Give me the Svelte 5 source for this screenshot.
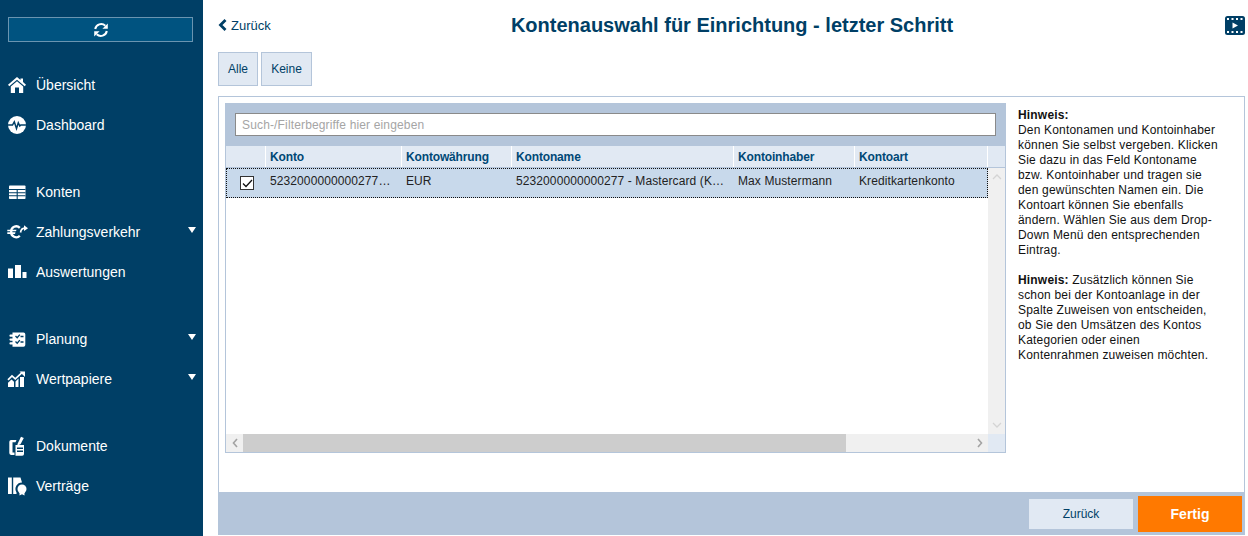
<script>
  const cols = [
    { label: 'Konto', cell: '5232000000000277…', w: 136 },
    { label: 'Kontowährung', cell: 'EUR', w: 110 },
    { label: 'Kontoname', cell: '5232000000000277 - Mastercard (K…', w: 222 },
    { label: 'Kontoinhaber', cell: 'Max Mustermann', w: 121 },
    { label: 'Kontoart', cell: 'Kreditkartenkonto', w: 133 }
  ];
  const groups = [
    [{ t: 'Übersicht', i: 'home' }, { t: 'Dashboard', i: 'dash' }],
    [{ t: 'Konten', i: 'konten' }, { t: 'Zahlungsverkehr', i: 'euro', c: true }, { t: 'Auswertungen', i: 'bars' }],
    [{ t: 'Planung', i: 'plan', c: true }, { t: 'Wertpapiere', i: 'chart', c: true }],
    [{ t: 'Dokumente', i: 'doc' }, { t: 'Verträge', i: 'contract' }]
  ];
</script>

<div class="page">
  <aside class="side">
    <button class="sync" aria-label="Aktualisieren">
      <svg width="16" height="16" viewBox="0 0 16 16"><path d="M2.200 7A6 6 0 0 1 12.300 3.800M13.800 9A6 6 0 0 1 3.700 12.200" fill="none" stroke="#fff" stroke-width="2"/><path d="M14.800 1.400V6.800H9.400ZM1.200 14.600V9.200H6.600Z" fill="#fff"/></svg>
    </button>
    {#each groups as g}
      <ul class="group">
        {#each g as it}
          <li class="item">
            <span class="ico">
              <svg width="22" height="20" viewBox="0 0 22 20" fill="#fff">
                {#if it.i === 'home'}
                  <path d="M10 2L1 9.700l1.300 1.500L10 4.700l7.700 6.500L19 9.700l-3-2.600V3.500h-2.500v1.500Z"/><path fill-rule="evenodd" d="M10 6.300l6.200 5.200V18H3.800V11.500ZM8 12.500V18h4v-5.500Z"/>
                {:else if it.i === 'dash'}
                  <circle cx="10" cy="10" r="9"/><path d="M0.500 10H5.500L7.300 6.800L9.500 13.500L11.300 7.800L12.800 11L13.800 10H19.500" fill="none" stroke="#003f66" stroke-width="1.500"/>
                {:else if it.i === 'konten'}
                  <rect x="2" y="3.500" width="16.500" height="13.500" rx="0.800"/><path d="M2 7.500H18.500M2 10.800H18.500M2 13.800H18.500M10.200 7.500V17" fill="none" stroke="#003f66" stroke-width="1.100"/>
                {:else if it.i === 'euro'}
                  <path d="M12.800 5.600A5 5 0 0 0 4.200 9.500A5 5 0 0 0 12.800 13.400" fill="none" stroke="#fff" stroke-width="2.300" transform="translate(0 .300)"/><path d="M0.300 7.700H9.500L9 9.300H0.300ZM0.300 10.300H8.500L8 11.900H0.300Z"/><path d="M13.500 10.500C14 7.500 15.500 6.300 17.500 6.200" fill="none" stroke="#fff" stroke-width="1.700"/><path d="M17 3.300L21 6.200L17 9Z"/>
                {:else if it.i === 'bars'}
                  <path d="M1 6.500h5V16H1ZM8 3h6v13H8ZM15.500 10H19.500V16H15.500Z"/>
                {:else if it.i === 'plan'}
                  <path d="M5.500 3.500H16.500A1.800 1.800 0 0 1 18.300 5.300V16A1.800 1.800 0 0 1 16.500 17.800H5.500V15.500H3.500A1.100 1.100 0 0 1 3.500 13.300H5.500V11.700H3.500A1.100 1.100 0 0 1 3.500 9.500H5.500V7.800H3.500A1.100 1.100 0 0 1 3.500 5.600H5.500Z"/><path d="M8.500 7L10.200 8.700L12.800 5.600M13.500 7.500H16.500M8.500 12.500L10.200 14.200L12.800 11.100M13.500 13H16.500" fill="none" stroke="#003f66" stroke-width="1.300"/>
                {:else if it.i === 'chart'}
                  <path d="M1 18V13.800L4.500 10.500L7 12.800V18ZM8.500 18V12.500L11.500 9.500V18ZM13 18V8H17V18Z"/><path d="M1 10.800L5 6.800L8.300 9.800L15.500 3.200" fill="none" stroke="#fff" stroke-width="1.700"/><path d="M12.500 2.500H18V8Z"/>
                {:else if it.i === 'doc'}
                  <path fill-rule="evenodd" d="M4 4H9.500L8.500 6.200H5.500V16.500H7.500V19H4A2 2 0 0 1 2.300 17V5.700A2 2 0 0 1 4 4ZM8.500 9H17V18A1.800 1.800 0 0 1 15.200 19.800H8.500ZM10 11.500V13H16V11.500ZM10 14.500V16H16V14.500Z"/><path d="M10.500 8L14 0.800L16.800 2L13.500 8.200L10.500 9.500Z"/>
                {:else if it.i === 'contract'}
                  <path d="M1 1.500H4.800V18H1ZM6.200 1.500H13.500L15 6.500A6.500 6.500 0 0 0 9.500 16.500L9.500 18H6.200Z"/><circle cx="15" cy="13" r="4.500"/><path d="M12.500 16H17.500V19.500L15 18.300L12.500 19.500Z"/>
                {/if}
              </svg>
            </span>
            <span class="label">{it.t}</span>
            {#if it.c}<span class="caret"></span>{/if}
          </li>
        {/each}
      </ul>
    {/each}
  </aside>

  <main class="main">
    <header class="head">
      <a class="back" href="#top">
        <svg width="9" height="12" viewBox="0 0 9 12"><path d="M7.500 1L2.500 6l5 5" fill="none" stroke="#003f66" stroke-width="2.800"/></svg>
        Zurück
      </a>
      <h1>Kontenauswahl für Einrichtung - letzter Schritt</h1>
      <svg class="film" width="20" height="19" viewBox="0 0 20 19">
        <rect x="0" y="0" width="20" height="19" rx="2.500" fill="#003f66"/>
        <g fill="#fff">
          <rect x="2" y="2" width="2" height="2"/><rect x="6.500" y="2" width="2" height="2"/><rect x="11" y="2" width="2" height="2"/><rect x="15.500" y="2" width="2" height="2"/>
          <rect x="2" y="15" width="2" height="2"/><rect x="6.500" y="15" width="2" height="2"/><rect x="11" y="15" width="2" height="2"/><rect x="15.500" y="15" width="2" height="2"/>
          <path d="M7.500 6.500L13 9.500L7.500 12.500Z"/>
        </g>
      </svg>
    </header>

    <div class="tools">
      <button class="tool alle">Alle</button>
      <button class="tool keine">Keine</button>
    </div>

    <section class="panel">
      <div class="body">
        <div class="grid">
          <div class="filter">
            <input placeholder="Such-/Filterbegriffe hier eingeben" />
          </div>
          <div class="row headrow">
            <div class="chk"></div>
            {#each cols as c}
              <div class="th" style="width:{c.w}px">{c.label}</div>
            {/each}
            <div class="thend"></div>
          </div>
          <div class="content">
            <div class="rows">
              <div class="row datarow">
                <div class="chk"><span class="box"><svg width="11" height="9" viewBox="0 0 11 9"><path d="M1 4.500L4 7.500L10 1" fill="none" stroke="#111" stroke-width="1.300"/></svg></span></div>
                {#each cols as c}
                  <div class="td" style="width:{c.w}px">{c.cell}</div>
                {/each}
              </div>
            </div>
            <div class="vscroll">
              <svg width="10" height="6" viewBox="0 0 10 6"><path d="M1 5l4-4 4 4" fill="none" stroke="#d4d4d4" stroke-width="1.300"/></svg>
              <svg width="10" height="6" viewBox="0 0 10 6"><path d="M1 1l4 4 4-4" fill="none" stroke="#d4d4d4" stroke-width="1.300"/></svg>
            </div>
          </div>
          <div class="hbar">
            <div class="hscroll">
              <span class="arrow"><svg width="6" height="10" viewBox="0 0 6 10"><path d="M5 1L1.500 5 5 9" fill="none" stroke="#a3a3a3" stroke-width="1.600"/></svg></span>
              <span class="thumb"></span>
              <span class="arrow end"><svg width="6" height="10" viewBox="0 0 6 10"><path d="M1 1l3.500 4L1 9" fill="none" stroke="#a3a3a3" stroke-width="1.600"/></svg></span>
            </div>
            <span class="corner"></span>
          </div>
        </div>
        <div class="hint">
          <p><b>Hinweis:</b><br />Den Kontonamen und Kontoinhaber können Sie selbst vergeben. Klicken Sie dazu in das Feld Kontoname bzw. Kontoinhaber und tragen sie den gewünschten Namen ein. Die Kontoart können Sie ebenfalls ändern. Wählen Sie aus dem Drop-Down Menü den entsprechenden Eintrag.</p>
          <p><b>Hinweis:</b> Zusätzlich können Sie schon bei der Kontoanlage in der Spalte Zuweisen von entscheiden, ob Sie den Umsätzen des Kontos Kategorien oder einen Kontenrahmen zuweisen möchten.</p>
        </div>
      </div>
      <footer class="foot">
        <button class="f-back">Zurück</button>
        <button class="f-done">Fertig</button>
      </footer>
    </section>
  </main>
</div>

<style>
  :global(body) { margin: 0; background: #fff; }
  .page { display: flex; width: 1248px; height: 536px; overflow: hidden; font-family: "Liberation Sans", Arial, sans-serif; font-size: 12px; color: #003f66; }
  button { font-family: inherit; cursor: pointer; padding: 0; }

  .side { width: 203px; flex: none; background: #003f66; color: #fff; padding-top: 17px; box-sizing: border-box; }
  .sync { display: flex; align-items: center; justify-content: center; width: 185px; height: 25px; margin: 0 0 0 8px; background: #005380; border: 1px solid #6a94b0; }
  .group { list-style: none; margin: 0 0 27px; padding: 0; }
  .sync + .group { margin-top: 23px; }
  .item { display: flex; align-items: center; height: 40px; font-size: 14px; }
  .ico { width: 22px; height: 20px; margin: 0 7px 0 7px; display: block; }
  .ico svg { display: block; }
  .label { flex: 1; }
  .caret { width: 0; height: 0; border-left: 4.500px solid transparent; border-right: 4.500px solid transparent; border-top: 6px solid #fff; margin: 0 7px 4px 0; }

  .main { flex: 1; min-width: 0; display: flex; flex-direction: column; padding: 0 3px 1px 15px; }
  .head { position: relative; display: flex; align-items: center; justify-content: space-between; height: 52px; }
  .back { display: flex; align-items: center; gap: 4px; font-size: 13px; color: #003f66; text-decoration: none; margin-top: -2px; }
  h1 { position: absolute; left: 0; right: 0; top: 13px; margin: 0 0 0 1px; text-align: center; font-size: 20px; line-height: 25px; font-weight: bold; color: #003f66; }
  .film { margin: -1px 0 0; }

  .tools { display: flex; gap: 3px; height: 44px; }
  .tool { height: 34px; background: #e1e9f3; border: 1px solid #b4c5da; color: #003f66; font-size: 12px; }
  .alle { width: 40px; }
  .keine { width: 51px; }

  .panel { flex: 1; min-height: 0; display: flex; flex-direction: column; border: 1px solid #b4c5da; border-bottom: 0; box-sizing: border-box; }
  .body { flex: 1; min-height: 0; display: flex; padding: 6px 0 0 6px; }
  .grid { width: 781px; height: 350px; flex: none; display: flex; flex-direction: column; box-sizing: border-box; border: 1px solid #b4c5da; border-top: 0; }
  .filter { background: #b4c5da; height: 43px; margin: 0 -1px; padding: 10px 10px 0; box-sizing: border-box; }
  input { display: block; width: 100%; height: 23px; box-sizing: border-box; border: 1px solid #8a8a8a; padding: 0 6px; font: 12px "Liberation Sans", Arial, sans-serif; letter-spacing: 0.15px; background: #fff; outline: 0; }
  input::placeholder { color: #a5a5a5; opacity: 1; }
  .row { display: flex; }
  .headrow { height: 22px; background: #e1e9f3; border-bottom: 1px solid #b4c5da; box-sizing: border-box; }
  .chk { width: 40px; flex: none; display: flex; align-items: center; justify-content: center; box-sizing: border-box; }
  .headrow .chk { border-right: 1px solid #fff; }
  .th { flex: none; box-sizing: border-box; padding: 0 4px; line-height: 23px; font-weight: bold; letter-spacing: -0.15px; color: #004876; border-right: 1px solid #fff; white-space: nowrap; overflow: hidden; }
  .thend { flex: 1; }
  .content { flex: 1; min-height: 0; display: flex; }
  .rows { width: 762px; flex: none; }
  .datarow { height: 30px; background: #c8d9eb; outline: 1px dotted #111; outline-offset: -1px; color: #222; align-items: center; }
  .box { width: 14px; height: 14px; box-sizing: border-box; border: 1px solid #333; background: #fff; display: flex; align-items: center; justify-content: center; margin: 0 0 0 2px; }
  .td { flex: none; box-sizing: border-box; padding: 0 4px; white-space: nowrap; overflow: hidden; margin-top: -4px; letter-spacing: 0.1px; }
  .vscroll { flex: 1; background: #f0f0f0; display: flex; flex-direction: column; justify-content: space-between; align-items: center; padding: 6px 0; box-sizing: border-box; }
  .hbar { display: flex; height: 18px; }
  .hscroll { display: flex; flex: 1; background: #f0f0f0; }
  .arrow { width: 17px; display: flex; align-items: center; justify-content: center; }
  .arrow.end { margin-left: auto; margin-right: 0; }
  .thumb { width: 603px; background: #cdcdcd; }
  .corner { width: 17px; background: #e1e9f3; }

  .hint { width: 200px; padding: 5px 0 0 12px; color: #111; line-height: 15px; letter-spacing: 0.18px; }
  .hint p { margin: 0 0 15px; }
  .foot { flex: none; height: 43px; box-sizing: border-box; background: #b4c5da; display: flex; justify-content: flex-end; align-items: flex-start; margin: 0 -1px 0; padding: 4px 3px 0 0; gap: 5px; }
  .f-back { width: 104px; height: 30px; margin-top: 3px; background: #e1e9f3; border: 0; color: #003f66; font-size: 12px; }
  .f-done { width: 104px; height: 36px; background: #ff7900; border: 0; color: #fff; font-size: 14px; font-weight: bold; }
</style>
